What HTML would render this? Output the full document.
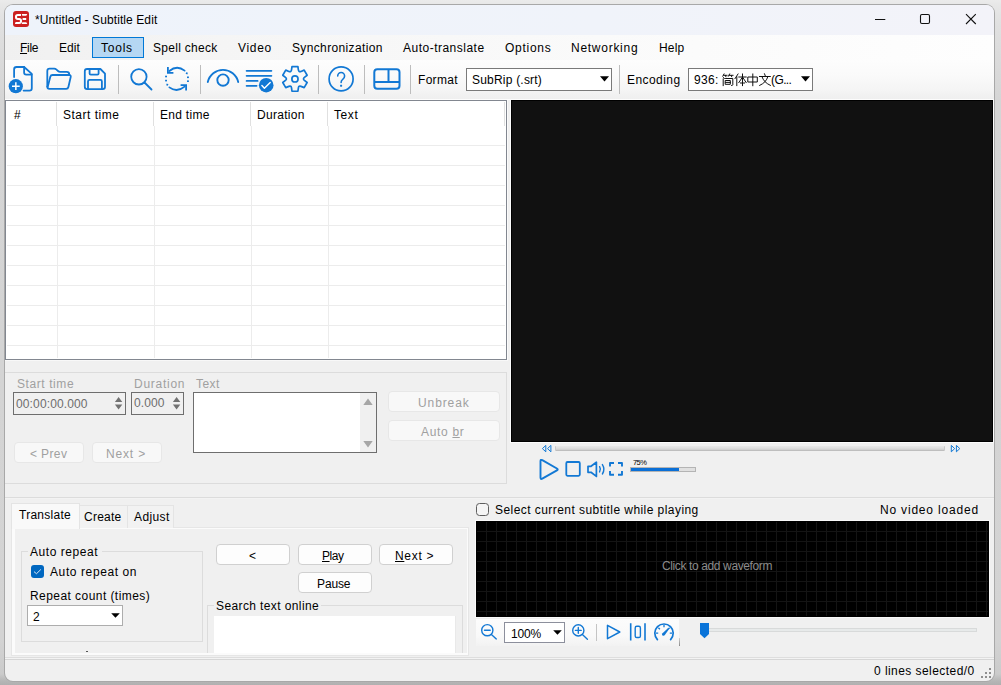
<!DOCTYPE html>
<html>
<head>
<meta charset="utf-8">
<title>Subtitle Edit</title>
<style>
*{box-sizing:border-box;margin:0;padding:0}
html,body{width:1001px;height:685px;overflow:hidden}
body{background:linear-gradient(180deg,#ebebeb 0px,#e7e7e7 5px,#e0e0e0 25px,#d5d5d5 100px,#d3d3d3 640px,#cbcbcb 674px,#b6b6b6 681px,#b0b0b0 685px);font-family:"Liberation Sans",sans-serif;font-size:12px;color:#000;position:relative}
.abs{position:absolute}
.t{position:absolute;white-space:nowrap;line-height:14px;height:14px}
#win{position:absolute;left:5px;top:5px;width:989px;height:676px;background:#f0f0f0;border-radius:8px;overflow:hidden;box-shadow:0 0 0 1px #a8a8a8}
/* everything inside #win is positioned relative to page via offset wrapper */
#pg{position:absolute;left:-5px;top:-5px;width:1001px;height:685px}
#title{left:5px;top:5px;width:989px;height:30px;background:linear-gradient(90deg,#eef3fb 0%,#f0f3fa 60%,#f3f3f9 100%)}
#menubar{left:5px;top:35px;width:989px;height:25px;background:linear-gradient(90deg,#f0f0f0 0%,#f5f5f5 22%,#fafafa 60%,#fefefe 100%)}
#toolbar{left:5px;top:60px;width:989px;height:39px;background:linear-gradient(180deg,#fdfdfd 0%,#fafafa 40%,#f5f5f5 75%,#efefef 100%)}
.sep{position:absolute;top:65px;width:1px;height:29px;background:#bdbdbd}
.combo{position:absolute;background:#fff;border:1px solid #7a7a7a}
.dis{color:#a0a0a0}
.btn{position:absolute;background:#fdfdfd;border:1px solid #d0d0d0;border-radius:4px;text-align:center}
.btnd{position:absolute;background:#f8f8f8;border:1px solid #e7e7e7;border-radius:4px;text-align:center;color:#a0a0a0}
u{text-decoration:underline;text-underline-offset:1px}
</style>
</head>
<body>
<div id="win"><div id="pg">

<!-- TITLE BAR -->
<div class="abs" id="title"></div>
<div class="abs" style="left:13px;top:11px;width:16px;height:16px;background:#cb2020;border-radius:3px"></div>
<svg class="abs" style="left:13px;top:11px" width="16" height="16" viewBox="0 0 16 16"><path d="M8 4H4.8Q3 4 3 5.7V6.3Q3 8 4.8 8H6.2Q8 8 8 9.7V10.3Q8 12 6.2 12H2.6" fill="none" stroke="#fff" stroke-width="2"/><path d="M1.8 13L3 11H6V13ZM8.7 3H14.3L13.3 4.8H9.3ZM9.6 7.1H13.2V9H9.6ZM9.3 11.2H13.3L14.3 13H8.7Z" fill="#fff"/></svg>
<div class="t" id="ttl" style="left:35px;top:13px;letter-spacing:0.09px">*Untitled - Subtitle Edit</div>
<svg class="abs" style="left:870px;top:9px" width="120" height="22" viewBox="0 0 120 22"><g fill="none" stroke="#111" stroke-width="1.1"><path d="M5 10.5H15.3"/><rect x="50.5" y="5.5" width="9" height="9" rx="1.4"/><path d="M96 5.2L105.8 15M105.8 5.2L96 15"/></g></svg>

<!-- MENU BAR -->
<div class="abs" id="menubar"></div>
<div class="abs" style="left:92px;top:37px;width:52px;height:21px;background:#b5d7f3;border:1px solid #0078d7"></div>
<div class="t m" id="m1" style="left:20px;top:41px;letter-spacing:-0.27px"><u>F</u>ile</div>
<div class="t m" id="m2" style="left:59px;top:41px;letter-spacing:0.02px">Edit</div>
<div class="t m" id="m3" style="left:101px;top:41px;letter-spacing:0.76px">Tools</div>
<div class="t m" id="m4" style="left:153px;top:41px;letter-spacing:0.30px">Spell check</div>
<div class="t m" id="m5" style="left:238px;top:41px;letter-spacing:0.67px">Video</div>
<div class="t m" id="m6" style="left:292px;top:41px;letter-spacing:0.36px">Synchronization</div>
<div class="t m" id="m7" style="left:403px;top:41px;letter-spacing:0.49px">Auto-translate</div>
<div class="t m" id="m8" style="left:505px;top:41px;letter-spacing:0.72px">Options</div>
<div class="t m" id="m9" style="left:571px;top:41px;letter-spacing:0.73px">Networking</div>
<div class="t m" id="m10" style="left:659px;top:41px;letter-spacing:0.19px">Help</div>

<!-- TOOLBAR -->
<div class="abs" id="toolbar"></div>
<div class="sep" style="left:118px"></div>
<div class="sep" style="left:200px"></div>
<div class="sep" style="left:318px"></div>
<div class="sep" style="left:364px"></div>
<div class="sep" style="left:410px"></div>
<div class="sep" style="left:619px"></div>

<svg class="abs" style="left:5px;top:60px" width="420" height="40" viewBox="5 60 420 40">
<g fill="none" stroke="#1278d4" stroke-width="1.8" stroke-linecap="round" stroke-linejoin="round">
<!-- new -->
<path d="M14.1 77V69.4Q14.1 67 16.5 67H24.1L31.8 73.8V88.2Q31.8 90.6 29.4 90.6H23.6"/>
<path d="M24.1 67V72.5Q24.1 74.6 26.2 74.6H31.6"/>
<!-- open -->
<path d="M47.3 86.5V71Q47.3 68.7 49.6 68.7H54.3Q55.4 68.7 56.2 69.4L58.3 71.2Q59 71.8 60.1 71.8H66.8Q69.2 71.8 69.2 74.2V75"/>
<path d="M47.6 87.4L50.3 76.8Q50.8 75 52.6 75H69Q71.2 75 70.7 77L68.4 87Q68 88.8 66.2 88.8H49.4Q47.3 88.8 47.3 86.5"/>
<!-- save -->
<path d="M87.1 69H100.4L105 73.6V86.8Q105 89.1 102.7 89.1H87.1Q84.8 89.1 84.8 86.8V71.3Q84.8 69 87.1 69Z"/>
<path d="M89.6 69.2V73.4Q89.6 74.6 90.8 74.6H97.4Q98.6 74.6 98.6 73.4V69.2"/>
<path d="M88 88.9V81.4Q88 79.9 89.5 79.9H100.4Q101.9 79.9 101.9 81.4V88.9"/>
<!-- search -->
<circle cx="138.9" cy="76.8" r="7.7"/>
<path d="M144.5 82.5L151.5 89.5"/>
<!-- replace -->
<path d="M169.4 71Q176.9 64.8 184.6 70.6"/>
<path d="M167.9 67V72.9H173.4" stroke-linecap="butt" stroke-linejoin="miter"/>
<path d="M169.4 87.4Q176.9 93 184.6 86.6"/>
<path d="M180.6 85.1H186.1V90.5" stroke-linecap="butt" stroke-linejoin="miter"/>
<!-- eye -->
<path d="M207.8 82A15.6 15.6 0 0 1 238.2 82" stroke-width="1.9"/>
<circle cx="223" cy="80.1" r="5.7" stroke-width="1.9"/>
<!-- list -->
<path d="M246.6 70.8H271.4M246.6 75.8H271.4M246.6 80.9H257.6M246.6 85.8H256.6" stroke-width="1.8"/>
<!-- gear -->
<path d="M291.51 69.94L291.99 66.55 L297.91 66.55 L298.39 69.94Q298.75 72.32 300.99 71.44L304.16 70.16 L307.13 75.29 L304.43 77.40Q302.55 78.90 304.43 80.40L307.13 82.51 L304.16 87.64 L300.99 86.36Q298.75 85.48 298.39 87.86L297.91 91.25 L291.99 91.25 L291.51 87.86Q291.15 85.48 288.91 86.36L285.74 87.64 L282.77 82.51 L285.47 80.40Q287.35 78.90 285.47 77.40L282.77 75.29 L285.74 70.16 L288.91 71.44Q291.15 72.32 291.51 69.94Z" stroke-width="1.7"/>
<circle cx="294.95" cy="78.9" r="3.1" stroke-width="1.7"/>
<!-- help -->
<circle cx="341.1" cy="78.9" r="12" stroke-width="1.7"/>
<path d="M337.7 76A3.45 3.45 0 0 1 344.6 76Q344.6 78 342.7 79.3Q341.1 80.4 341.1 82.5" stroke-width="1.6"/>
<!-- layout -->
<rect x="374.3" y="69.2" width="25.2" height="19.5" rx="3" stroke-width="2"/>
<path d="M374.3 81.9H399.5M388.5 69.2V81.9" stroke-width="2" stroke-linecap="butt"/>
</g>
<g fill="#1278d4">
<circle cx="15.8" cy="86.2" r="7.1"/>
<circle cx="266.2" cy="85.2" r="7.3"/>
<rect x="340.1" y="84.7" width="2" height="2" rx=".4"/>
<rect x="185.9" y="72.5" width="1.8" height="1.7" transform="rotate(20 186.8 73.3)"/>
<rect x="187" y="76.5" width="1.9" height="1.6"/>
<rect x="187" y="80.4" width="1.9" height="1.6"/>
<rect x="165.1" y="75.7" width="1.9" height="1.6"/>
<rect x="165.1" y="79.8" width="1.9" height="1.6"/>
<rect x="166.4" y="83.8" width="1.8" height="1.7" transform="rotate(20 167.3 84.6)"/>
</g>
<g fill="none" stroke="#fff" stroke-width="1.5">
<path d="M12 86.2H19.7M15.85 82.2V90"/>
<path d="M261.9 85.6L264.4 88.3L270.2 82.4" stroke-linecap="round" stroke-linejoin="round" stroke-width="1.4"/>
</g>
</svg>

<div class="t" id="fmt" style="left:418px;top:73px;letter-spacing:0.31px">Format</div>
<div class="combo" style="left:466px;top:68px;width:146px;height:23px"></div>
<div class="t" id="fmtv" style="left:472px;top:73px;letter-spacing:0.21px">SubRip (.srt)</div>
<svg class="abs" style="left:600px;top:76px" width="9" height="6"><path d="M0 0.3H9L4.5 5.6Z" fill="#000"/></svg>
<div class="t" id="enc" style="left:627px;top:73px;letter-spacing:0.44px">Encoding</div>
<div class="combo" style="left:688px;top:68px;width:125px;height:23px"></div>
<div class="t" id="encv" style="left:694px;top:73px;letter-spacing:0.30px">936:</div>
<div class="t" id="encv2" style="left:771px;top:73px;letter-spacing:-0.60px">(G...</div>
<svg class="abs" style="left:801px;top:76px" width="9" height="6"><path d="M0 0.3H9L4.5 5.6Z" fill="#000"/></svg>

<svg class="abs" style="left:722px;top:73px" width="50" height="14" viewBox="0 0 50 14"><g fill="none" stroke="#111" stroke-width="1" stroke-linecap="square">
<!-- jian -->
<path d="M2 1L0.8 3.2M1.8 2.3H5M3.4 2.5L3.9 3.7M7.6 1L6.4 3.2M7.4 2.3H11M9.2 2.5L9.7 3.7"/>
<path d="M1.6 4.6L2.3 5.6M1.2 6V12.6M3.6 5.5H10.8V11.8Q10.8 12.6 9.6 12.5"/>
<path d="M3.7 7.5H8.3V11.3H3.7ZM3.7 9.4H8.3"/>
<!-- ti -->
<g transform="translate(12.4 0)"><path d="M3.6 1L0.6 5.6M2.4 3.8V12.6M4.4 4H11.8M8.1 1V12.6M8 4.2L4.4 9.6M8.2 4.2L11.8 9.6M6.1 10H10.1"/></g>
<!-- zhong -->
<g transform="translate(24.8 0)"><path d="M1.5 4H10.5V9H1.5ZM6 1V12.7"/></g>
<!-- wen -->
<g transform="translate(36.8 0)"><path d="M5.7 0.8L6.4 2.6M0.7 3.5H11.5M9 3.8Q7.5 9.5 0.9 12.4M3.2 3.8Q5 9.5 11.6 12.4"/></g>
</g></svg>



<!-- LIST VIEW -->
<div class="abs" style="left:5px;top:100px;width:502px;height:260px;background:#fff;border:1px solid #828790"></div>
<div class="abs" id="grid" style="left:7px;top:126px;width:498px;height:232px;
background:
linear-gradient(#ececec,#ececec) 50px 0/1px 100% no-repeat,
linear-gradient(#ececec,#ececec) 147px 0/1px 100% no-repeat,
linear-gradient(#ececec,#ececec) 244px 0/1px 100% no-repeat,
linear-gradient(#ececec,#ececec) 321px 0/1px 100% no-repeat,
repeating-linear-gradient(180deg,transparent 0,transparent 19px,#ececec 19px,#ececec 20px)"></div>
<div class="abs" style="left:56px;top:102px;width:1px;height:24px;background:#e0e0e0"></div>
<div class="abs" style="left:153px;top:102px;width:1px;height:24px;background:#e0e0e0"></div>
<div class="abs" style="left:250px;top:102px;width:1px;height:24px;background:#e0e0e0"></div>
<div class="abs" style="left:327px;top:102px;width:1px;height:24px;background:#e0e0e0"></div>
<div class="abs" style="left:504px;top:102px;width:1px;height:24px;background:#e0e0e0"></div>
<div class="t" id="h0" style="left:14px;top:108px;letter-spacing:0.30px">#</div>
<div class="t" id="h1" style="left:63px;top:108px;letter-spacing:0.51px">Start time</div>
<div class="t" id="h2" style="left:160px;top:108px;letter-spacing:0.29px">End time</div>
<div class="t" id="h3" style="left:257px;top:108px;letter-spacing:0.30px">Duration</div>
<div class="t" id="h4" style="left:334px;top:108px;letter-spacing:0.60px">Text</div>

<!-- EDIT GROUP -->
<div class="abs" style="left:5px;top:372px;width:502px;height:112px;border:1px solid #dcdcdc;border-left:none"></div>
<div class="t dis" id="e1" style="left:17px;top:377px;letter-spacing:0.58px">Start time</div>
<div class="t dis" id="e2" style="left:134px;top:377px;letter-spacing:0.73px">Duration</div>
<div class="t dis" id="e3" style="left:196px;top:377px;letter-spacing:0.47px">Text</div>
<div class="abs" style="left:13px;top:392px;width:113px;height:23px;border:1px solid #6e6e6e;background:#f0f0f0"></div>
<div class="t dis" id="e4" style="left:16px;top:397px;color:#6d6d6d;letter-spacing:0.13px">00:00:00.000</div>
<svg class="abs" style="left:114px;top:396px" width="9" height="14"><path d="M0.9 5.9L4.6 1.1L8.3 5.9ZM0.9 8.6L4.6 13.4L8.3 8.6Z" fill="#727272"/></svg>
<div class="abs" style="left:131px;top:392px;width:53px;height:23px;border:1px solid #6e6e6e;background:#f0f0f0"></div>
<div class="t dis" id="e5" style="left:134px;top:396px;color:#6d6d6d;letter-spacing:0.08px">0.000</div>
<svg class="abs" style="left:172px;top:396px" width="9" height="14"><path d="M0.9 5.9L4.6 1.1L8.3 5.9ZM0.9 8.6L4.6 13.4L8.3 8.6Z" fill="#727272"/></svg>
<div class="abs" style="left:193px;top:392px;width:184px;height:61px;border:1px solid #6e6e6e;background:#fff"></div>
<div class="abs" style="left:360px;top:393px;width:16px;height:59px;background:#f0f0f0"></div>
<svg class="abs" style="left:363px;top:398px" width="10" height="50"><path d="M0.3 7L5 0.6L9.7 7ZM0.3 43L5 49.4L9.7 43Z" fill="#a6a6a6"/></svg>
<div class="btnd" style="left:14px;top:442px;width:70px;height:21px"></div>
<div class="t dis" id="e6" style="left:30px;top:447px;letter-spacing:0.38px">&lt; Prev</div>
<div class="btnd" style="left:92px;top:442px;width:70px;height:21px"></div>
<div class="t dis" id="e7" style="left:106px;top:447px;letter-spacing:0.84px">Next &gt;</div>
<div class="btnd" style="left:388px;top:391px;width:112px;height:21px"></div>
<div class="t dis" id="e8" style="left:418px;top:396px;letter-spacing:0.90px">Unbreak</div>
<div class="btnd" style="left:388px;top:420px;width:112px;height:21px"></div>
<div class="t dis" id="e9" style="left:421px;top:425px;letter-spacing:0.68px">Auto <u>b</u>r</div>

<!-- VIDEO -->
<div class="abs" style="left:5px;top:99px;width:989px;height:1px;background:#fdfdfd"></div>
<div class="abs" style="left:510px;top:99px;width:484px;height:344px;background:#111;border:1px solid #fcfcfc;box-shadow:inset 0 0 0 1px #000"></div>
<div class="abs" style="left:507px;top:100px;width:1px;height:261px;background:#fafafa"></div><div class="abs" style="left:5px;top:360px;width:503px;height:1px;background:#f8f8f8"></div>
<div class="abs" style="left:555px;top:446px;width:390px;height:5px;background:linear-gradient(180deg,#e9e9e9,#dedede 45%,#d2d2d2 70%,#b4b4b4);border-left:1px solid #c9c9c9;border-right:1px solid #c9c9c9;border-radius:1px"></div>


<svg class="abs" style="left:535px;top:440px" width="440" height="45" viewBox="535 440 440 45">
<g fill="none" stroke="#1278d4" stroke-width="1" stroke-linejoin="miter">
<path d="M545.8 445.4V451.8L542.4 448.6ZM550.9 445.4V451.8L547.5 448.6Z"/>
<path d="M951.3 445.4V451.8L954.7 448.6ZM956.4 445.4V451.8L959.8 448.6Z"/>
</g>
<g fill="none" stroke="#1278d4" stroke-width="1.8" stroke-linejoin="round" stroke-linecap="round">
<path d="M540.5 461.2Q540.5 459.2 542.3 460.2L556.9 468.5Q558.5 469.4 556.9 470.3L542.3 478.6Q540.5 479.6 540.5 477.6Z" stroke-width="1.9"/>
<rect x="566.3" y="462" width="13.5" height="13.8" rx="1.2"/>
<path d="M588 466.3H591L596.4 462.2V476.4L591 472.3H588Z" stroke-width="1.7"/>
<path d="M599.6 466.7Q601.2 469.3 599.6 471.9M602.4 464.6Q605.4 469.3 602.4 474" stroke-width="1.4"/>
<path d="M610 466.6V463H614M618 463H622V466.6M622 471.1V474.7H618M614 474.7H610V471.1" stroke-linecap="butt" stroke-linejoin="round" stroke-width="1.9"/>
</g></svg>

<div class="abs" style="left:630px;top:467px;width:66px;height:5px;border:1px solid #b4b4b4;background:#e0e0e0"></div>
<div class="abs" style="left:631px;top:468px;width:48px;height:3px;background:#0a6fd6"></div>
<div class="t" id="v75" style="left:633px;top:459px;font-size:7.5px;line-height:8px;height:8px;letter-spacing:-.55px;color:#000">75%</div>

<!-- SPLITTER -->
<div class="abs" style="left:5px;top:497px;width:989px;height:1px;background:#dcdcdc"></div><div class="abs" style="left:5px;top:498px;width:989px;height:1px;background:#f3f3f3"></div>


<!-- TAB CONTROL -->
<div class="abs" style="left:11px;top:527px;width:458px;height:129px;background:#fbfbfb;border:1px solid #e6e6e6"></div>
<div class="abs" style="left:15px;top:529px;width:452px;height:124px;background:#f0f0f0"></div>
<div class="abs" style="left:79px;top:505px;width:49px;height:23px;background:#f2f2f2;border:1px solid #e4e4e4;border-bottom:none"></div>
<div class="abs" style="left:127px;top:505px;width:47px;height:23px;background:#f2f2f2;border:1px solid #e4e4e4;border-bottom:none"></div>
<div class="abs" style="left:11px;top:503px;width:69px;height:26px;background:#f9f9f9;border:1px solid #e4e4e4;border-bottom:none"></div>
<div class="t" id="b1" style="left:19px;top:508px;letter-spacing:0.26px">Translate</div>
<div class="t" id="b2" style="left:84px;top:510px;letter-spacing:0.24px">Create</div>
<div class="t" id="b3" style="left:134px;top:510px;letter-spacing:0.40px">Adjust</div>
<!-- auto repeat group -->
<div class="abs" style="left:21px;top:551px;width:182px;height:91px;border:1px solid #dcdcdc"></div>
<div class="abs" style="left:28px;top:545px;width:74px;height:14px;background:#f0f0f0"></div>
<div class="t" id="b4" style="left:30px;top:545px;letter-spacing:0.55px">Auto repeat</div>
<div class="abs" style="left:31px;top:565px;width:13px;height:13px;background:#0067c0;border-radius:3px"></div>
<svg class="abs" style="left:31px;top:565px" width="13" height="13"><path d="M3.3 6.9L5.5 8.7L9.6 4.7" fill="none" stroke="#eef3fb" stroke-width=".9" stroke-linecap="round" stroke-linejoin="round"/></svg>
<div class="t" id="b5" style="left:50px;top:565px;letter-spacing:0.60px">Auto repeat on</div>
<div class="t" id="b6" style="left:30px;top:589px;letter-spacing:0.44px">Repeat count (times)</div>
<div class="combo" style="left:27px;top:605px;width:96px;height:21px;border-color:#adadad"></div>
<div class="t" id="b7" style="left:33px;top:610px;letter-spacing:-0.80px">2</div>
<svg class="abs" style="left:111px;top:613px" width="9" height="5"><path d="M0.2 0.2H8.8L4.5 4.8Z" fill="#000"/></svg>
<div class="abs" style="left:86px;top:651px;width:2px;height:1px;background:#555"></div>
<!-- buttons -->
<div class="btn" style="left:216px;top:544px;width:74px;height:21px"></div>
<div class="btn" style="left:298px;top:544px;width:74px;height:21px"></div>
<div class="btn" style="left:379px;top:544px;width:74px;height:21px"></div>
<div class="btn" style="left:298px;top:572px;width:74px;height:21px"></div>
<div class="t" id="b8" style="left:249px;top:549px;letter-spacing:-0.90px">&lt;</div>
<div class="t" id="b9" style="left:322px;top:549px;letter-spacing:-0.43px"><u>P</u>lay</div>
<div class="t" id="b10" style="left:395px;top:549px;letter-spacing:0.68px"><u>N</u>ext &gt;</div>
<div class="t" id="b11" style="left:317px;top:577px;letter-spacing:-0.12px">Pause</div>
<!-- search group -->
<div class="abs" style="left:207px;top:605px;width:256px;height:48px;border:1px solid #dcdcdc;border-bottom:none"></div>
<div class="abs" style="left:214px;top:599px;width:107px;height:14px;background:#f0f0f0"></div>
<div class="t" id="b12" style="left:216px;top:599px;letter-spacing:0.39px">Search text online</div>
<div class="abs" style="left:214px;top:616px;width:242px;height:37px;background:#fff;border-right:1px solid #e9e9e9"></div>
<!-- clip tab page bottom -->


<!-- WAVEFORM AREA -->
<div class="abs" style="left:476px;top:503px;width:13px;height:13px;background:#f5f5f5;border:1px solid #5e5e5e;border-radius:3.5px"></div>
<div class="t" id="w1" style="left:495px;top:503px;letter-spacing:0.44px">Select current subtitle while playing</div>
<div class="t" id="w2" style="left:880px;top:503px;letter-spacing:0.81px">No video loaded</div>
<div class="abs" style="left:475px;top:520px;width:515px;height:98px;background:#fafafa"></div>
<div class="abs" style="left:476px;top:521px;width:513px;height:96px;background:#000"></div>
<div class="abs" style="left:477px;top:522px;width:511px;height:94px;
background-image:linear-gradient(90deg,#141414 1px,transparent 1px),linear-gradient(180deg,#141414 1px,transparent 1px);background-size:10px 10px;background-position:9px 9px"></div>
<div class="t" id="w3" style="left:662px;top:559px;color:#8c8c8c;letter-spacing:-0.38px">Click to add waveform</div>
<div class="abs" style="left:476px;top:619px;width:203px;height:27px;background:linear-gradient(180deg,#fcfcfc,#f9f9f9 60%,#f2f2f2)"></div>
<div class="combo" style="left:504px;top:622px;width:61px;height:21px;border-color:#8c8f9c"></div>
<div class="t" id="w4" style="left:511px;top:627px;letter-spacing:-0.20px">100%</div>
<svg class="abs" style="left:553px;top:630px" width="9" height="5"><path d="M0.2 0.2H8.8L4.5 4.8Z" fill="#000"/></svg>
<div class="abs" style="left:596px;top:624px;width:1px;height:17px;background:#c4c4c4"></div>
<div class="abs" style="left:679px;top:638px;width:1px;height:8px;background:linear-gradient(180deg,#d0d0d0,#8a8a8a)"></div>

<svg class="abs" style="left:476px;top:617px" width="210" height="30" viewBox="476 617 210 30">
<g fill="none" stroke="#1278d4" stroke-width="1.4" stroke-linecap="round" stroke-linejoin="round">
<circle cx="487.3" cy="630.2" r="5.6"/><path d="M484.5 630.2H490.2M491.4 634.4L496.3 638.9"/>
<circle cx="578.3" cy="630.4" r="5.6"/><path d="M575.4 630.4H581.2M578.3 627.5V633.3M582.4 634.6L587.4 639.2"/>
<path d="M607.5 625.3V638.7L619.8 632Z" stroke-width="1.5"/>
<path d="M630.7 623.2V640.6M645 623.2V640.6" stroke-width="1.6" stroke-linecap="butt"/>
<rect x="635.2" y="626.3" width="5.2" height="11.2" rx="1.6" stroke-width="1.4"/>
<path d="M657.4 639.6A9.2 9.2 0 1 1 670.6 639.6" stroke-width="1.7"/>
<path d="M659.9 629.2L658.4 627.7M664 627.2V625M668.1 629.2L669.6 627.7M658.2 633.2H656M669.8 633.2H672" stroke-width="1.3" stroke-linecap="butt"/>
<path d="M662.5 633.2L667.9 628.2L668.9 629.2L664.7 635.3Q663.3 636.3 662.3 635.2Q661.5 634.2 662.5 633.2Z" fill="#1278d4" stroke="none"/>
</g></svg>

<div class="abs" style="left:705px;top:628px;width:272px;height:4px;border:1px solid #d8dada;background:#e7eaea"></div>
<svg class="abs" style="left:699px;top:622px" width="12" height="18"><path d="M1 1H10V12L5.5 16.3L1 12Z" fill="#0a74d9"/></svg>

<!-- STATUS BAR -->
<div class="abs" style="left:5px;top:657px;width:989px;height:1px;background:#dedede"></div>
<div class="abs" style="left:5px;top:658px;width:989px;height:1px;background:#f3f3f3"></div>
<div class="abs" style="left:5px;top:659px;width:989px;height:1px;background:#d6d6d6"></div>
<div class="t" id="s1" style="left:874px;top:664px;letter-spacing:0.44px">0 lines selected/0</div>
<svg class="abs" style="left:981px;top:668px" width="10" height="10"><g fill="#8e8e8e"><rect x="8" y="0" width="2" height="2"/><rect x="4" y="4" width="2" height="2"/><rect x="8" y="4" width="2" height="2"/><rect x="0" y="8" width="2" height="2"/><rect x="4" y="8" width="2" height="2"/><rect x="8" y="8" width="2" height="2"/></g></svg>



</div></div>
</body>
</html>
